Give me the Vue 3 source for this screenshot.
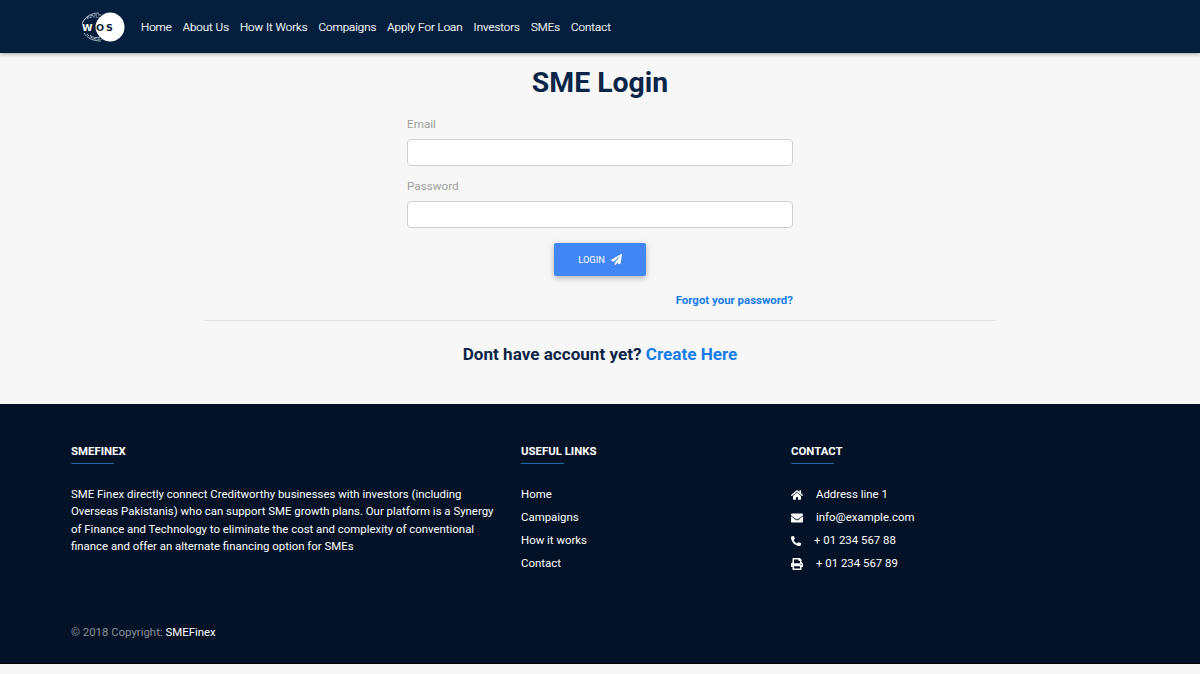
<script setup>
const navItems = ['Home', 'About Us', 'How It Works', 'Compaigns', 'Apply For Loan', 'Investors', 'SMEs', 'Contact']
const usefulLinks = ['Home', 'Campaigns', 'How it works', 'Contact']
</script>

<template>
  <div class="page">
    <header class="topbar">
      <svg class="logo" width="44" height="30" viewBox="0 0 44 30">
        <circle cx="29" cy="15" r="14.5" fill="#fff" />
        <path d="M10 0H27C22 2 17 6 15 11H10Z" fill="#031f3d" />
        <path d="M10 30H27C22 28 17 24 15 19H10Z" fill="#031f3d" />
        <g fill="none" stroke="#d5dbe2" stroke-width="0.8">
          <path d="M2 10C4 5 10 1 18 1" />
          <path d="M1 12C3 6 9 2 21 3" stroke-dasharray="3 1" />
          <path d="M6 7C9 5 14 4 19 6" stroke-dasharray="2 1" />
          <path d="M3 21C6 26 12 29 20 29" />
          <path d="M6 22C9 26 14 28 22 27" stroke-dasharray="3 1" />
          <path d="M9 23C12 26 15 26 19 25" />
        </g>
        <text x="1" y="19" class="logo-w">W</text>
        <text x="15" y="19" class="logo-o">O</text>
        <text x="25" y="19" class="logo-s">S</text>
      </svg>
      <nav class="nav">
        <a v-for="item in navItems" :key="item">{{ item }}</a>
      </nav>
    </header>

    <main class="login">
      <h1>SME Login</h1>
      <form class="form" @submit.prevent>
        <label>Email</label>
        <input type="text" />
        <label class="second">Password</label>
        <input type="password" />
        <button class="btn" type="button">
          <span>LOGIN</span>
          <svg width="11" height="11" viewBox="0 0 512 512"><path fill="#fff" d="M476 3L13 270c-18 10-16 36 3 44l106 44L408 106c5-5 13 2 8 8L176 406v80c0 24 29 33 43 16l64-78 125 52c14 6 31-3 33-19L512 28c3-20-19-35-36-25z"/></svg>
        </button>
        <a class="forgot">Forgot your password?</a>
      </form>
      <hr />
      <p class="signup">Dont have account yet? <a>Create Here</a></p>
    </main>

    <footer class="footer">
      <div class="cols">
        <section class="col about">
          <h4>SMEFINEX</h4>
          <p>SME Finex directly connect Creditworthy businesses with investors (including Overseas Pakistanis) who can support SME growth plans. Our platform is a Synergy of Finance and Technology to eliminate the cost and complexity of conventional finance and offer an alternate financing option for SMEs</p>
        </section>
        <section class="col links">
          <h4>USEFUL LINKS</h4>
          <ul>
            <li v-for="l in usefulLinks" :key="l">{{ l }}</li>
          </ul>
        </section>
        <section class="col contact">
          <h4>CONTACT</h4>
          <ul>
            <li>
              <svg width="12" height="12" viewBox="0 0 576 512"><path fill="#fff" d="M280 148L96 300v164c0 9 7 16 16 16l112-1c9 0 16-7 16-16v-95c0-9 7-16 16-16h64c9 0 16 7 16 16v95c0 9 7 16 16 16l112 1c9 0 16-7 16-16V300L296 148c-5-4-11-4-16 0zm292 103l-84-69V44c0-7-5-12-12-12h-56c-7 0-12 5-12 12v72l-89-74c-18-14-44-14-62 0L4 251c-5 4-6 12-2 17l26 31c4 5 12 6 17 2L280 107c5-4 11-4 16 0l235 194c5 4 13 3 17-2l26-31c4-5 3-13-2-17z"/></svg>
              <span class="t1">Address line 1</span>
            </li>
            <li>
              <svg width="12" height="12" viewBox="0 0 512 512"><path fill="#fff" d="M502 191c4-3 10 0 10 5v204c0 27-22 48-48 48H48c-27 0-48-21-48-48V196c0-5 6-8 10-5 22 17 52 39 154 113 21 15 57 48 92 48s72-33 92-48c102-74 132-96 154-113zM256 320c23 0 57-29 73-41 133-96 143-105 174-129 6-5 9-12 9-19v-19c0-27-22-48-48-48H48C21 64 0 85 0 112v19c0 7 3 14 9 19 31 24 41 33 174 129 16 12 50 41 73 41z"/></svg>
              <span class="t2">info@example.com</span>
            </li>
            <li>
              <svg width="10" height="12" viewBox="0 0 512 512"><path fill="#fff" d="M18 25L122 1c11-3 23 3 27 14l48 112c4 10 1 21-7 28l-60 50c36 77 99 140 178 178l50-60c7-8 18-11 28-7l112 48c11 5 17 16 14 28l-24 104c-3 11-12 18-23 18C209 512 0 303 0 48c0-11 8-20 18-23z"/></svg>
              <span class="t3">+ 01 234 567 88</span>
            </li>
            <li>
              <svg width="12" height="12" viewBox="0 0 512 512"><path fill="#fff" d="M448 192V77c0-8-3-17-9-23L393 9c-6-6-14-9-23-9H96C78 0 64 14 64 32v160c-35 0-64 29-64 64v112c0 9 7 16 16 16h48v96c0 18 14 32 32 32h320c18 0 32-14 32-32v-96h48c9 0 16-7 16-16V256c0-35-29-64-64-64zM384 448H128v-96h256zm0-224H128V64h192v48c0 9 7 16 16 16h48zm48 72c-13 0-24-11-24-24s11-24 24-24 24 11 24 24-11 24-24 24z"/></svg>
              <span class="t1">+ 01 234 567 89</span>
            </li>
          </ul>
        </section>
      </div>
      <p class="copy">© 2018 Copyright: <strong>SMEFinex</strong></p>
    </footer>
    <div class="tail"></div>
  </div>
</template>

<style>
html, body { margin: 0; background: #f7f7f7; }
</style>

<style scoped>
.page {
  font-family: Roboto, "Liberation Sans", sans-serif;
  background: #f7f7f7;
  min-height: 674px;
}
.topbar {
  height: 53px;
  background: #031f3d;
  display: flex;
  align-items: center;
  padding-left: 81px;
  box-sizing: border-box;
  box-shadow: 0 1px 4px rgba(0, 0, 0, 0.35);
  position: relative;
}
.logo { margin-right: 16px; flex: none; }
.logo-w, .logo-o, .logo-s {
  font: 700 9.5px "DejaVu Sans", sans-serif;
}
.logo-w { fill: #fff; }
.logo-o { fill: #031f3d; }
.logo-s { fill: #031f3d; }
.nav { display: flex; gap: 11px; }
.nav a {
  color: #fff;
  font-size: 11.5px;
  font-weight: 300;
  line-height: 18px;
  -webkit-text-stroke: 0.2px #fff;
}
.login { height: 351px; display: flex; flex-direction: column; align-items: center; }
h1 {
  margin: 13px 0 0;
  color: #0a2548;
  font-size: 28.4px;
  font-weight: 700;
  line-height: 34px;
}
.form {
  width: 386px;
  margin-top: 17px;
  display: flex;
  flex-direction: column;
}
label {
  color: #9e9e9e;
  font-size: 11.7px;
  line-height: 14px;
  height: 22px;
}
label.second { margin-top: 13px; }
input {
  height: 27px;
  box-sizing: border-box;
  border: 1px solid #d0d0d0;
  border-radius: 4px;
  background: #fff;
  padding: 0 10px;
  outline: none;
}
.btn {
  align-self: center;
  width: 92px;
  height: 33px;
  margin-top: 15px;
  background: #4285f4;
  border: 0;
  border-radius: 2px;
  color: #fff;
  font: 400 9.3px Roboto, sans-serif;
  display: flex;
  align-items: center;
  justify-content: center;
  gap: 6px;
  box-shadow: 0 2px 5px rgba(0, 0, 0, 0.18), 0 2px 10px rgba(0, 0, 0, 0.12);
}
.forgot {
  align-self: flex-end;
  margin-top: 17px;
  color: #167ce9;
  font-size: 11.45px;
  font-weight: 700;
  line-height: 14px;
}
hr {
  width: 792px;
  margin: 13px 0 0;
  border: 0;
  border-top: 1px solid #e2e2e2;
}
.signup {
  margin: 22px 0 0;
  color: #0a2548;
  font-size: 17.1px;
  font-weight: 700;
  line-height: 22px;
}
.signup a { color: #167ce9; }
.footer {
  height: 260px;
  box-sizing: border-box;
  background: #041227;
  padding: 40px 71px 0;
  color: #fff;
  border-bottom: 1px solid #000;
}
.cols { display: flex; }
.about { width: 450px; }
.about p { width: 428px; }
.links { width: 270px; }
h4 {
  margin: 0;
  font-size: 11.4px;
  font-weight: 700;
  line-height: 14px;
  padding-bottom: 5px;
  position: relative;
  height: 14px;
}
h4::after {
  content: "";
  position: absolute;
  left: 0;
  top: 19px;
  width: 43px;
  height: 1px;
  background: #1a6ea8;
}
.col p {
  margin: 23px 0 0;
  font-size: 11.42px;
  line-height: 17.3px;
  font-weight: 400;
}
ul {
  list-style: none;
  margin: 20px 0 0;
  padding: 0;
  font-size: 11.42px;
}
li {
  height: 23px;
  line-height: 23px;
  display: flex;
  align-items: center;
}
.t1 { margin-left: 13px; }
.t2 { margin-left: 13px; }
.t3 { margin-left: 13px; }
.copy {
  margin: 50px 0 0;
  font-size: 11.4px;
  color: #8a8f98;
  line-height: 14px;
}
.copy strong { color: #fff; font-weight: 400; }
.tail { height: 10px; background: #f7f7f7; }
</style>
